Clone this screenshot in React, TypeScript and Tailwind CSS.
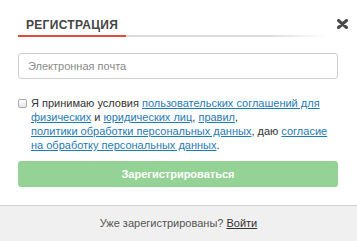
const App = () => {
  return (
    <div
      className="flex h-[241px] w-[357px] flex-col bg-white text-[11px] text-[#333]"
      style={{ fontFamily: '"Liberation Sans", Arial, sans-serif' }}
    >
      {/* Header with tab */}
      <div className="flex items-start pt-[18px] pl-[18px] pr-[9px]">
        <div className="flex flex-1 items-end">
          <div className="border-b-2 border-[#e04b3a] px-2 pb-[3px] text-[12px] leading-[14px] font-bold tracking-[0.3px] text-[#444]">
            РЕГИСТРАЦИЯ
          </div>
          <div className="mr-[10px] h-[2px] flex-1 bg-gradient-to-r from-[#dcdcdc] from-70% to-transparent" />
        </div>
        <button type="button" className="mt-[1px] text-[#444]">
          <svg width="11" height="10" viewBox="0 0 11 10">
            <path
              d="M1.5 1.5 L9.5 8.5 M9.5 1.5 L1.5 8.5"
              stroke="#4a4a4a"
              strokeWidth="3"
              strokeLinecap="round"
            />
          </svg>
        </button>
      </div>

      {/* Form */}
      <div className="flex flex-col px-[18px] pr-[19px] pt-[16px]">
        <input
          type="text"
          placeholder="Электронная почта"
          className="h-[26px] rounded-[3px] border border-[#cfcfcf] px-[9px] text-[11px] placeholder:text-[#8a8a8a] outline-none"
        />

        <div className="mt-[17px] flex gap-[4px] leading-[14px]">
          <input
            type="checkbox"
            className="mt-[3px] h-[9px] w-[9px] shrink-0 appearance-none rounded-[2px] border border-[#aaa] bg-gradient-to-b from-white to-[#e6e6e6]"
          />
          <p className="text-[#333]">
            Я принимаю условия{" "}
            <a href="#" className="text-[#1f7bb6] underline">
              пользовательских соглашений для физических
            </a>{" "}
            и{" "}
            <a href="#" className="text-[#1f7bb6] underline">
              юридических лиц
            </a>
            ,{" "}
            <a href="#" className="text-[#1f7bb6] underline">
              правил
            </a>
            ,
            <br />
            <a href="#" className="text-[#1f7bb6] underline">
              политики обработки персональных данных
            </a>
            , даю{" "}
            <a href="#" className="text-[#1f7bb6] underline">
              согласие на обработку персональных данных
            </a>
            .
          </p>
        </div>

        <button
          type="button"
          className="mt-[9px] h-[26px] rounded-[3px] bg-[#94d296] text-[11px] font-bold text-white"
        >
          Зарегистрироваться
        </button>
      </div>

      {/* Footer */}
      <div className="mt-auto flex h-[36px] items-center justify-center border-t border-[#d0d0d0] bg-[#f0f0f0] text-[#555]">
        Уже зарегистрированы?&nbsp;
        <a href="#" className="text-[#333] underline">
          Войти
        </a>
      </div>
    </div>
  );
};

export default App;
